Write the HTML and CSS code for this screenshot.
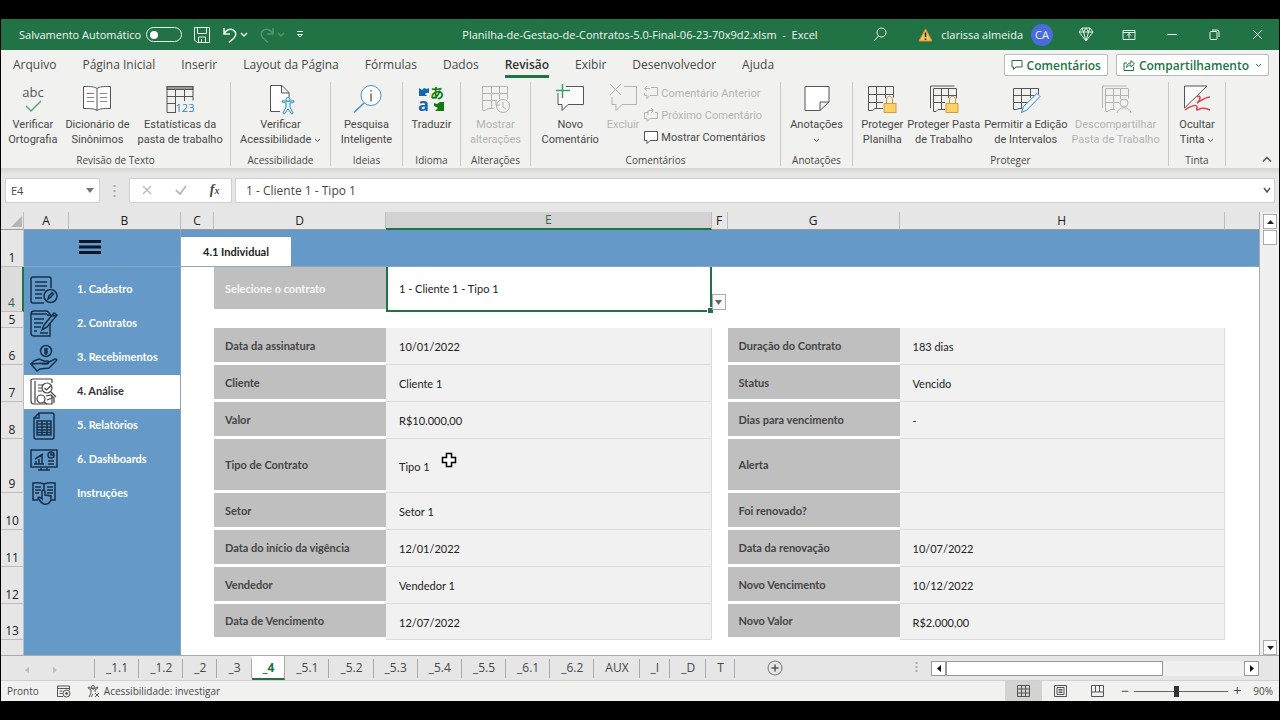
FILE: index.html
```html
<!DOCTYPE html>
<html lang="pt-BR">
<head>
  <meta charset="UTF-8">
  <meta name="viewport" content="width=device-width, initial-scale=1.0">
  <title>Planilha de Gestão de Contratos - Excel</title>
  <link rel="stylesheet" href="styles.css">
</head>
<body>
  <header class="titlebar">
    <div class="quick-access">
      <label class="autosave">Salvamento Automático <input type="checkbox" class="switch"></label>
      <button class="qa-btn" aria-label="Salvar"><svg width="18" height="18" viewBox="0 0 18 18"><path d="M1.500 1.500h15v15H4l-2.500-2.500zM4.500 1.500v6h9v-6M5.500 16.500v-5.500h7v5.500M8.500 13v3"/></svg></button>
      <button class="qa-btn undo" aria-label="Desfazer"><svg width="16" height="18" viewBox="0 0 16 18"><path d="M2 2v6h6M2 8C4 4 8 2 11 4c4 2 3 6 1 8l-5 4.500" stroke-width="1.500"/></svg><svg width="8" height="6" viewBox="0 0 8 6"><path d="M1 1l3 3 3-3" stroke-width="1.500"/></svg></button>
      <button class="qa-btn redo" aria-label="Refazer" disabled><svg width="16" height="18" viewBox="0 0 16 18"><path d="M14 2v6H8M14 8C12 4 8 2 5 4c-4 2-3 6-1 8l5 4.500" stroke-width="1.500"/></svg><svg width="8" height="6" viewBox="0 0 8 6"><path d="M1 1l3 3 3-3" stroke-width="1.500"/></svg></button>
      <button class="qa-btn" aria-label="Personalizar"><svg width="8" height="9" viewBox="0 0 8 9"><path d="M1 1.500h6M1.500 4.500l2.500 2.500 2.500-2.500z"/></svg></button>
    </div>
    <div class="doc-title">Planilha-de-Gestao-de-Contratos-5.0-Final-06-23-70x9d2.xlsm&nbsp; -&nbsp; Excel</div>
    <div class="account">
      <button class="qa-btn search" aria-label="Pesquisar"><svg width="14" height="15" viewBox="0 0 14 15"><circle cx="8.500" cy="5.500" r="4.500"/><path d="M5.500 9L1 14"/></svg></button>
      <svg class="warning" width="15" height="14" viewBox="0 0 15 14"><path d="M7.500 1L14 13H1z" fill="#f9c35c" stroke="#d98e2c"/><path d="M7.500 4.500v4.500M7.500 10.500v1.500" stroke="#222" stroke-width="1.500"/></svg>
      <span>clarissa almeida</span>
      <span class="avatar">CA</span>
      <button class="win-btn" aria-label="Premium"><svg width="16" height="15" viewBox="0 0 16 15"><path d="M4 1h8l3 4-7 9-7-9zM1 5h14M4 1l1.500 4L8 14l2.500-9L12 1M5.500 5L8 1l2.500 4"/></svg></button>
      <button class="win-btn" aria-label="Opções da faixa"><svg width="14" height="12" viewBox="0 0 14 12"><path d="M1 1.500h12v9H1zM1 3.500h12M7 9.500v-5M5 6.500l2-2 2 2"/></svg></button>
      <button class="win-btn" aria-label="Minimizar"><svg width="10" height="10" viewBox="0 0 10 10"><path d="M0 4.500h10"/></svg></button>
      <button class="win-btn" aria-label="Restaurar"><svg width="11" height="11" viewBox="0 0 11 11"><path d="M1 3.500q0-1 1-1h5q1 0 1 1v6q0 1-1 1H2q-1 0-1-1zM3 1h5q2 0 2 2v5"/></svg></button>
      <button class="win-btn" aria-label="Fechar"><svg width="11" height="11" viewBox="0 0 11 11"><path d="M1 1l9 9M10 1l-9 9"/></svg></button>
    </div>
  </header>

  <nav class="menu">
    <a href="#">Arquivo</a>
    <a href="#">Página Inicial</a>
    <a href="#">Inserir</a>
    <a href="#">Layout da Página</a>
    <a href="#">Fórmulas</a>
    <a href="#">Dados</a>
    <a href="#" class="active">Revisão</a>
    <a href="#">Exibir</a>
    <a href="#">Desenvolvedor</a>
    <a href="#">Ajuda</a>
    <div class="share">
      <button class="share-btn"><svg width="12" height="12" viewBox="0 0 12 12"><path d="M1 1.500h10v6.500H5l-2.500 2.500V8H1z"/></svg>Comentários</button>
      <button class="share-btn"><svg width="12" height="12" viewBox="0 0 12 12"><path d="M4 4H1v7.500h9.500V8M3.500 8.500c0-3 2-4.500 4.500-4.500V1.500L11.500 5 8 8V6C6 6 5 7 3.500 8.500z"/></svg>Compartilhamento<svg class="share-arrow" width="7" height="5" viewBox="0 0 7 5"><path d="M1 1l2.500 2.500L6 1"/></svg></button>
    </div>
  </nav>

  <section class="ribbon">
    <div class="group g-text">
      <div class="tools">
        <button class="tool"><svg width="30" height="30" viewBox="0 0 30 30"><text x="15" y="13" text-anchor="middle" class="abc">abc</text><path d="M8 22l5 5 10-10" stroke="#5aa978" stroke-width="1.500"/></svg>Verificar<br>Ortografia</button>
        <button class="tool"><svg width="30" height="30" viewBox="0 0 30 30"><path d="M15 4.500C12 2.500 9 2.500 1.500 2.500v22c7.500 0 10.500 0 13.500 2 3-2 6-2 13.500-2v-22c-7.500 0-10.500 0-13.500 2v22" fill="#fff"/><path d="M18 9.500h7M18 13.500h7M5 17.500h7M18 17.500h7M5 13.500h7" stroke="#888"/><path d="M5 9.500h7" stroke="#c55"/></svg>Dicionário de<br>Sinônimos</button>
        <button class="tool"><svg width="30" height="30" viewBox="0 0 30 30"><path d="M2 2.500h26v3H2z" fill="#999"/><path d="M11 28.500H2v-26h26v14M2 12.500h26M2 19.500h9M10.500 5v23M19.500 5v12"/><text x="20" y="28" text-anchor="middle" class="stat">123</text></svg>Estatísticas da<br>pasta de trabalho</button>
      </div>
      <div class="group-name">Revisão de Texto</div>
    </div>
    <div class="group g-access">
      <div class="tools">
        <button class="tool"><svg width="30" height="30" viewBox="0 0 30 30"><path d="M15 27.500H5.500v-26H17l7 7v5M16.500 1.500V9H24" fill="#fff"/><g stroke="#2f87c1" fill="#e2f1fb"><circle cx="23" cy="15.500" r="2"/><path d="M17 18l4 1v4l-3 6 1.500 1 3.500-5 3.500 5 1.500-1-3-6v-4l4-1-.5-1.500-5.500 1-5.500-1z"/></g></svg>Verificar<br>Acessibilidade <svg class="arrow" width="7" height="5" viewBox="0 0 7 5"><path d="M1 1l2.500 2.500L6 1"/></svg></button>
      </div>
      <div class="group-name">Acessibilidade</div>
    </div>
    <div class="group g-ideas">
      <div class="tools">
        <button class="tool"><svg width="30" height="30" viewBox="0 0 30 30"><circle cx="19" cy="11.500" r="10" fill="#fafcff" stroke="#4a8fc2"/><path d="M12 19L2 28.500" stroke="#4a8fc2" stroke-width="1.500"/><path d="M19 9.500v8M19 6v1.500" stroke="#222"/></svg>Pesquisa<br>Inteligente</button>
      </div>
      <div class="group-name">Ideias</div>
    </div>
    <div class="group g-lang">
      <div class="tools">
        <button class="tool"><svg width="30" height="30" viewBox="0 0 30 30"><text x="2" y="27" class="lang-a">a</text><text x="14" y="14" class="lang-j">あ</text><path d="M3 4v8h8L9 10q2-2 4-1V4l-2 1-3-1-2 2z" fill="#1565b5" stroke="none"/><path d="M28 18v9h-9l3-3-4-2v-3l3 1 3-2z" fill="#107c10" stroke="none"/></svg>Traduzir</button>
      </div>
      <div class="group-name">Idioma</div>
    </div>
    <div class="group g-changes">
      <div class="tools">
        <button class="tool" disabled><svg width="30" height="30" viewBox="0 0 30 30"><path d="M14 24.500H8l-2.500 2H2.500v-24h25v13M2.500 9.500h25M2.500 16.500H17M11.500 2.500v22M19.500 2.500V15"/><circle cx="23" cy="22" r="6.500" fill="#f1f2ef"/><path d="M23 18v5l3 2M16 17v4h4"/></svg>Mostrar<br>alterações</button>
      </div>
      <div class="group-name">Alterações</div>
    </div>
    <div class="group g-comments">
      <div class="tools">
        <button class="tool"><svg width="30" height="30" viewBox="0 0 30 30"><path d="M3 9v11.500h4v6l6-6h15.500v-18H11" fill="#fafafa"/><path d="M7.500 0v14M1 6.500h14" stroke="#3d9e68" stroke-width="1.500"/></svg>Novo<br>Comentário</button>
        <button class="tool" disabled><svg width="30" height="30" viewBox="0 0 30 30"><path d="M4 13v7.500h4v6l6-6h14.500v-18H16"/><path d="M2 0l11 11M13 0L2 11"/></svg>Excluir</button>
        <div class="tool-list">
          <button class="tool-row" disabled><svg width="16" height="16" viewBox="0 0 16 16"><path d="M8 2.500h6.500v8H7l-3 3v-3H1.500V8M4 1L1.500 3.500 4 6M1.500 3.500H7"/></svg>Comentário Anterior</button>
          <button class="tool-row" disabled><svg width="16" height="16" viewBox="0 0 16 16"><path d="M12 5.500h2.500v6H7l-3 3v-3H1.500v-6H5M8 1l2.500 2.500L8 6M5 8V3.500h5"/></svg>Próximo Comentário</button>
          <button class="tool-row"><svg width="16" height="16" viewBox="0 0 16 16"><path d="M1.500 2.500h13v9H7l-3 3v-3H1.500z" fill="#fff"/></svg>Mostrar Comentários</button>
        </div>
      </div>
      <div class="group-name">Comentários</div>
    </div>
    <div class="group g-notes">
      <div class="tools">
        <button class="tool"><svg width="30" height="30" viewBox="0 0 30 30"><path d="M3 2.500h24V18l-9 8.500H3zM27 18h-9v8.500" fill="#fff"/></svg>Anotações<br><svg class="arrow" width="7" height="5" viewBox="0 0 7 5"><path d="M1 1l2.500 2.500L6 1"/></svg></button>
      </div>
      <div class="group-name">Anotações</div>
    </div>
    <div class="group g-protect">
      <div class="tools">
        <button class="tool"><svg width="30" height="30" viewBox="0 0 30 30"><path d="M16 24.500H8l-2.500 2H1.500v-24h25v11M1.500 10.500h25M1.500 18.500H16M9.500 2.500v22M18.500 2.500V14"/><path d="M19.500 19v-3c0-5 6-5 6 0v3" stroke="#c98a2c"/><path d="M17 19.500h12v9H17z" fill="#fcd266" stroke="#d99a3c"/></svg>Proteger<br>Planilha</button>
        <button class="tool"><svg width="30" height="30" viewBox="0 0 30 30"><path d="M1.500 24V2h24" /><path d="M16 25.500H9l-2 2H4.500v-23h23v10M4.500 11.500h23M4.500 18.500H16M12.500 4.500v21M19.500 4.500V14"/><path d="M20.500 19v-3c0-5 6-5 6 0v3" stroke="#c98a2c"/><path d="M17 19.500h12v9H17z" fill="#fcd266" stroke="#d99a3c"/></svg>Proteger Pasta<br>de Trabalho</button>
        <button class="tool"><svg width="30" height="30" viewBox="0 0 30 30"><path d="M11 24.500H8l-2.500 1H2.500v-21h25v6M2.500 11.500h21M2.500 18.500H16M10.500 4.500v20M19.500 4.500V14"/><path d="M10.500 28.500l2-6L26 9.500l3 3-13 13.500z" fill="#eaf5fd" stroke="#3a86bd"/></svg>Permitir a Edição<br>de Intervalos</button>
        <button class="tool" disabled><svg width="30" height="30" viewBox="0 0 30 30"><path d="M1.500 24V2h24"/><path d="M14 25.500H9l-2 2H4.500v-23h23v10M4.500 11.500h23M4.500 18.500H18M12.500 4.500v21M19.500 4.500V15"/><circle cx="23" cy="19" r="4" fill="#f1f2ef"/><path d="M16 29c1-7 13-7 14 0"/></svg>Descompartilhar<br>Pasta de Trabalho</button>
      </div>
      <div class="group-name">Proteger</div>
    </div>
    <div class="group g-ink">
      <div class="tools">
        <button class="tool"><svg width="30" height="30" viewBox="0 0 30 30"><path d="M2.500 2v22L25 2z" fill="#fafafa"/><path d="M15 13c4-3 4 3 0 6 5-3 9-6 13-6M3 26c5-4 12-6 12-3 0 2-1 3 0 3 3-1 6-4 13 0" stroke="#d6474c" stroke-width="1.500"/></svg>Ocultar<br>Tinta <svg class="arrow" width="7" height="5" viewBox="0 0 7 5"><path d="M1 1l2.500 2.500L6 1"/></svg></button>
      </div>
      <div class="group-name">Tinta</div>
    </div>
    <button class="collapse" aria-label="Recolher faixa"><svg width="10" height="7" viewBox="0 0 10 7"><path d="M1 5.500l4-4 4 4" stroke-width="1.500"/></svg></button>
  </section>

  <section class="formula-bar">
    <div class="name-box">
      <input type="text" value="E4" aria-label="Caixa de nome">
      <svg width="8" height="5" viewBox="0 0 8 5"><path d="M0 0h8L4 5z" fill="#777"/></svg>
    </div>
    <svg class="dots" width="3" height="12" viewBox="0 0 3 12"><path d="M1.500 0v12" stroke="#aaa" stroke-width="2" stroke-dasharray="2 3"/></svg>
    <div class="fx-box">
      <button aria-label="Cancelar"><svg width="10" height="10" viewBox="0 0 10 10"><path d="M1 1l8 8M9 1L1 9" stroke="#bbb" stroke-width="1.500"/></svg></button>
      <button aria-label="Inserir"><svg width="12" height="10" viewBox="0 0 12 10"><path d="M1 5l4 4 6-8" stroke="#bbb" stroke-width="2"/></svg></button>
      <button class="fx" aria-label="Inserir função"><i>f<sub>x</sub></i></button>
    </div>
    <div class="formula">
      <input type="text" value="1 - Cliente 1 - Tipo 1" aria-label="Barra de fórmulas">
      <svg width="8" height="7" viewBox="0 0 8 7"><path d="M1 1l3 4 3-4" stroke="#555" stroke-width="1.500"/></svg>
    </div>
  </section>

  <main class="workbook">
    <div class="sheet-wrap">
      <table class="sheet">
        <colgroup>
          <col class="c-num"><col class="c-a"><col class="c-b"><col class="c-c"><col class="c-d"><col><col class="c-f"><col class="c-g"><col><col class="c-end">
        </colgroup>
        <thead>
          <tr>
            <th class="corner"><svg width="11" height="11" viewBox="0 0 11 11"><path d="M11 0v11H0z" fill="#b5b5b5"/></svg></th>
            <th>A</th><th>B</th><th>C</th><th>D</th><th class="current">E</th><th>F</th><th>G</th><th>H</th><th></th>
          </tr>
        </thead>
        <tbody>
          <tr class="row-1">
            <th class="num">1</th>
            <td colspan="2" class="burger"><button aria-label="Menu"><svg width="22" height="14" viewBox="0 0 22 14"><path d="M0 1.500h22M0 7h22M0 12.500h22" stroke="#0b1726" stroke-width="3"/></svg></button></td>
            <td colspan="7" class="top-band"><a href="#" class="page-tab">4.1 Individual</a></td>
          </tr>
          <tr class="row-4">
            <th class="num current">4</th>
            <td colspan="2" rowspan="11" class="side">
              <nav class="side-nav">
                <a href="#"><svg width="28" height="28" viewBox="0 0 28 28"><path d="M14 27H3q-2 0-2-2V3q0-2 2-2h16q2 0 2 2v9M5 6h12M5 10h12M5 14h10M5 18h7M5 22h7"/><circle cx="20.500" cy="20" r="6.500"/><path d="M18 23l1-3 3-3.500 1.500 1.500-3 3.500z"/></svg>1. Cadastro</a>
                <a href="#"><svg width="28" height="28" viewBox="0 0 28 28"><path d="M20 13v13H4q-3 0-3-3V4q0-3 3-3h13l3 3v2M1 4h16"/><path d="M4 9h10M4 13h9M4 17h7M4 21h3"/><path d="M12 20l2-5L24 3l3 2-10 12zM17 5l9 1M10 23h8"/></svg>2. Contratos</a>
                <a href="#"><svg width="28" height="28" viewBox="0 0 28 28"><circle cx="16" cy="7" r="5.500"/><path d="M18 5h-3v2h2v2h-3M16 4v7"/><path d="M1 20l3-3 5-2 5 2h4q2 2-1 3h-5M17 19l8-4q3 0 1 2l-7 7-9 1-3 2-6-7z"/></svg>3. Recebimentos</a>
                <a href="#" class="active"><svg width="28" height="28" viewBox="0 0 28 28"><path d="M22 5V2q0-1-1-1H3Q1 1 1 3v20q0 3 3 3h18v-8M5 3v22M8 7h5M8 10h4M8 13h4"/><circle cx="17" cy="10" r="5"/><path d="M14.500 10l2 2 4-4M21 14l5 5"/><circle cx="11" cy="21" r="4"/><path d="M16 18l5-1 3 3v5M14 24l3 2M17 22l5-2"/></svg>4. Análise</a>
                <a href="#"><svg width="28" height="28" viewBox="0 0 28 28"><path d="M4 6l5-5h13q2 0 2 2v22q0 2-2 2H6q-2 0-2-2zM4 6h5V1M7 9h14v14H7zM12 9v14M17 9v14M7 12h14M7 15h14M7 18h14M7 20.500h14"/></svg>5. Relatórios</a>
                <a href="#"><svg width="28" height="28" viewBox="0 0 28 28"><path d="M1 4h26v17H1zM11 22v2h6v-2M8 24h12"/><path d="M4 18h10M6 18v-3M9 18v-5M12 18V9M5 13l8-5M18 15h6M18 18h6"/><circle cx="21" cy="9" r="3"/><path d="M21 6v3h3"/></svg>6. Dashboards</a>
                <a href="#"><svg width="28" height="28" viewBox="0 0 28 28"><path d="M8 20H3V3q6-1 11 1 5-2 11-1v17h-4M14 4v7"/><path d="M5 7h6M5 10h6M5 13h4M17 7h6M17 10h6M17 13h6"/><path d="M12 17v-6q1-2 3 0v4l6 1v4q-2 5-7 4-3-1-6-6 1-2 4 1z"/></svg>Instruções</a>
              </nav>
            </td>
            <td></td>
            <th class="label picker">Selecione o contrato</th>
            <td class="selected">
              <select aria-label="Selecione o contrato"><option>1 - Cliente 1 - Tipo 1</option></select>
              <span class="handle"></span>
              <button class="drop" aria-label="Abrir lista"><svg width="7" height="5" viewBox="0 0 7 5"><path d="M0 0h7L3.500 5z" fill="#666"/></svg></button>
            </td>
            <td></td><td></td><td></td><td></td>
          </tr>
          <tr class="row-5"><th class="num">5</th><td></td><td></td><td></td><td></td><td></td><td></td><td></td></tr>
          <tr class="row">
            <th class="num">6</th><td></td>
            <th class="label">Data da assinatura</th><td class="value">10/01/2022</td><td></td>
            <th class="label">Duração do Contrato</th><td class="value">183 dias</td><td></td>
          </tr>
          <tr class="row">
            <th class="num">7</th><td></td>
            <th class="label">Cliente</th><td class="value">Cliente 1</td><td></td>
            <th class="label">Status</th><td class="value">Vencido</td><td></td>
          </tr>
          <tr class="row">
            <th class="num">8</th><td></td>
            <th class="label">Valor</th><td class="value">R$10.000,00</td><td></td>
            <th class="label">Dias para vencimento</th><td class="value">-</td><td></td>
          </tr>
          <tr class="row tall">
            <th class="num">9</th><td></td>
            <th class="label">Tipo de Contrato</th>
            <td class="value">Tipo 1<svg class="cursor" width="16" height="16" viewBox="0 0 16 16"><path d="M5.500 1.500h5v4h4v5h-4v4h-5v-4h-4v-5h4z" fill="#fff" stroke="#000" stroke-width="1.500"/></svg></td><td></td>
            <th class="label">Alerta</th><td class="value"></td><td></td>
          </tr>
          <tr class="row">
            <th class="num">10</th><td></td>
            <th class="label">Setor</th><td class="value">Setor 1</td><td></td>
            <th class="label">Foi renovado?</th><td class="value"></td><td></td>
          </tr>
          <tr class="row">
            <th class="num">11</th><td></td>
            <th class="label">Data do início da vigência</th><td class="value">12/01/2022</td><td></td>
            <th class="label">Data da renovação</th><td class="value">10/07/2022</td><td></td>
          </tr>
          <tr class="row">
            <th class="num">12</th><td></td>
            <th class="label">Vendedor</th><td class="value">Vendedor 1</td><td></td>
            <th class="label">Novo Vencimento</th><td class="value">10/12/2022</td><td></td>
          </tr>
          <tr class="row short">
            <th class="num">13</th><td></td>
            <th class="label">Data de Vencimento</th><td class="value">12/07/2022</td><td></td>
            <th class="label">Novo Valor</th><td class="value">R$2.000,00</td><td></td>
          </tr>
          <tr class="row-end"><th class="num"></th><td></td><td></td><td></td><td></td><td></td><td></td><td></td></tr>
        </tbody>
      </table>
    </div>
    <div class="vscroll">
      <button aria-label="Rolar para cima"><svg width="7" height="4" viewBox="0 0 7 4"><path d="M0 4h7L3.500 0z" fill="#222"/></svg></button>
      <div class="vthumb"></div>
      <button class="down" aria-label="Rolar para baixo"><svg width="7" height="4" viewBox="0 0 7 4"><path d="M0 0h7L3.500 4z" fill="#222"/></svg></button>
    </div>
  </main>

  <nav class="sheet-tabs">
    <div class="tab-nav">
      <button aria-label="Planilha anterior"><svg width="5" height="6" viewBox="0 0 5 6"><path d="M4 0v6L0 3z" fill="#bbb"/></svg></button>
      <button aria-label="Próxima planilha"><svg width="5" height="6" viewBox="0 0 5 6"><path d="M1 0v6l4-3z" fill="#bbb"/></svg></button>
    </div>
    <a href="#">_1.1</a>
    <a href="#">_1.2</a>
    <a href="#">_2</a>
    <a href="#">_3</a>
    <a href="#" class="active">_4</a>
    <a href="#">_5.1</a>
    <a href="#">_5.2</a>
    <a href="#">_5.3</a>
    <a href="#">_5.4</a>
    <a href="#">_5.5</a>
    <a href="#">_6.1</a>
    <a href="#">_6.2</a>
    <a href="#">AUX</a>
    <a href="#">_I</a>
    <a href="#">_D</a>
    <a href="#">T</a>
    <button class="add" aria-label="Nova planilha"><svg width="16" height="16" viewBox="0 0 16 16"><circle cx="8" cy="8" r="7" stroke="#777"/><path d="M8 4.500v7M4.500 8h7" stroke="#555" stroke-width="1.500"/></svg></button>
    <svg class="dots" width="3" height="12" viewBox="0 0 3 12"><path d="M1.500 0v12" stroke="#aaa" stroke-width="2" stroke-dasharray="2 2"/></svg>
    <div class="hscroll">
      <button aria-label="Rolar para a esquerda"><svg width="4" height="7" viewBox="0 0 4 7"><path d="M4 0v7L0 3.500z" fill="#111"/></svg></button>
      <div class="hthumb"></div>
      <button class="right" aria-label="Rolar para a direita"><svg width="4" height="7" viewBox="0 0 4 7"><path d="M0 0v7l4-3.500z" fill="#111"/></svg></button>
    </div>
  </nav>

  <footer class="status">
    <span>Pronto</span>
    <svg class="macro" width="14" height="13" viewBox="0 0 14 13"><path d="M6 11.500H.5V1h12v4M.5 3.500h12M2.500 6h3M2.500 8.500h3"/><circle cx="9.500" cy="8.500" r="3.500"/><circle cx="9.500" cy="8.500" r="1" fill="#555"/></svg>
    <button class="access"><svg width="13" height="13" viewBox="0 0 13 13"><circle cx="6" cy="2" r="1.500"/><path d="M1 3l3 2v3L2 12M11 3L8 5v2M1 3q0-1 1-1l3 2h2l3-2q1 0 1 1M6 9l-2 3M8 8l4 4M12 8l-4 4"/></svg>Acessibilidade: investigar</button>
    <div class="views">
      <button class="active" aria-label="Normal"><svg width="13" height="12" viewBox="0 0 13 12"><path d="M.5.5h12v11H.5zM.5 4h12M.5 8h12M4.500.5v11M8.500.5v11"/></svg></button>
      <button aria-label="Layout da Página"><svg width="13" height="12" viewBox="0 0 13 12"><path d="M.5.5h12v11H.5zM3 2.500h7v7H3zM4.500 4.500h4M4.500 6h4M4.500 7.500h4"/></svg></button>
      <button aria-label="Quebra de página"><svg width="13" height="12" viewBox="0 0 13 12"><path d="M.5.5h12v11H.5zM4.500.5V7h4V.5M.5 7h4M8.500 7h4"/></svg></button>
    </div>
    <div class="zoom">
      <button aria-label="Reduzir">−</button>
      <input type="range" min="10" max="190" value="90" aria-label="Zoom">
      <button aria-label="Ampliar">+</button>
      <span>90%</span>
    </div>
  </footer>
</body>
</html>
```
FILE: styles.css
```css
* {
  box-sizing: border-box;
}

body {
  margin: 0;
  padding: 19px 1px;
  height: 100vh;
  display: flex;
  flex-direction: column;
  overflow: hidden;
  background-color: #000;
  font-family: "Open Sans", "Noto Sans", sans-serif;
  font-size: 11px;
  color: #484848;
}

button, input, select {
  font: inherit;
  color: inherit;
  background: none;
  border: none;
  margin: 0;
  padding: 0;
}

a {
  color: inherit;
  text-decoration: none;
}

svg {
  fill: none;
  stroke: none;
  flex: none;
}

/* title bar */
.titlebar {
  height: 31px;
  flex: none;
  display: grid;
  grid-template-columns: 1fr auto 1fr;
  align-items: center;
  background-color: #217346;
  color: #f0f6f2;
}

.titlebar svg {
  stroke: #e8f2ec;
}

.quick-access {
  display: flex;
  align-items: center;
  gap: 11px;
  padding-left: 18px;
}

.autosave {
  display: flex;
  align-items: center;
  gap: 5px;
}

.switch {
  appearance: none;
  width: 36px;
  height: 15px;
  border: 1px solid #e8f2ec;
  border-radius: 8px;
  display: flex;
  align-items: center;
  padding: 0 3px;
}

.switch::before {
  content: "";
  width: 8px;
  height: 8px;
  border-radius: 50%;
  background-color: #fff;
}

.qa-btn {
  display: flex;
  align-items: center;
  gap: 2px;
}

.redo {
  opacity: 0.25;
}

.account {
  display: flex;
  align-items: center;
  justify-content: flex-end;
}

.search {
  margin-right: 31px;
}

.warning {
  margin-right: 8px;
}

.avatar {
  width: 22px;
  height: 22px;
  margin: 0 11px 0 8px;
  border-radius: 50%;
  background-color: #4b6bdc;
  display: flex;
  align-items: center;
  justify-content: center;
}

.win-btn {
  width: 43px;
  height: 31px;
  display: flex;
  align-items: center;
  justify-content: center;
}

/* menu */
.menu {
  height: 30px;
  flex: none;
  display: flex;
  align-items: center;
  gap: 26px;
  padding: 0 10px 0 12px;
  background-color: #f1f2ef;
  font-size: 12px;
}

.menu a {
  height: 26px;
  line-height: 26px;
  white-space: nowrap;
}

.menu .active {
  font-weight: 600;
  color: #333;
  border-bottom: 3px solid #217346;
}

.share {
  margin-left: auto;
  display: flex;
  gap: 8px;
}

.share-btn {
  height: 22px;
  padding: 0 6px;
  display: flex;
  align-items: center;
  gap: 4px;
  border: 1px solid #b9b9b9;
  border-radius: 2px;
  background-color: #fff;
  color: #217346;
  font-weight: 600;
}

.share-btn svg {
  stroke: #217346;
}

.share-arrow {
  margin-left: 2px;
}

/* ribbon */
.ribbon {
  height: 88px;
  flex: none;
  display: flex;
  background-color: #f1f2ef;
}

.ribbon svg {
  stroke: #555;
  overflow: visible;
}

.group {
  display: flex;
  flex-direction: column;
  margin: 2px 0;
  border-right: 1px solid #c9c9c7;
}

.tools {
  flex: 1;
  display: flex;
  justify-content: center;
  font-family: Roboto, "Open Sans", sans-serif;
}

.g-text { width: 230px; }
.g-access { width: 100px; }
.g-ideas { width: 72px; }
.g-lang { width: 58px; }
.g-changes { width: 70px; }
.g-comments { width: 250px; }
.g-notes { width: 72px; }
.g-protect { width: 316px; }
.g-ink { width: 57px; }

.tool {
  padding: 2px 4px 0;
  line-height: 15px;
  text-align: center;
  white-space: nowrap;
  display: block;
  align-self: flex-start;
}

.g-protect .tool {
  padding: 2px 2px 0;
}

.g-comments .tools {
  padding-right: 8px;
}

.tool > svg:first-child {
  display: block;
  margin: 0 auto 3px;
}

.tool .arrow {
  vertical-align: middle;
}

.ribbon button:disabled {
  color: #b4b4b2;
}

.ribbon button:disabled svg {
  stroke: #b4b4b2;
}

.ribbon text {
  font-family: "Open Sans", sans-serif;
  stroke: none;
}

.abc {
  font-size: 13px;
  fill: #555;
}

.stat {
  font-size: 11px;
  fill: #2f87c1;
}

.lang-a {
  font-size: 18px;
  font-weight: 700;
  fill: #1565b5;
}

.ribbon .lang-j {
  font-family: "Noto Sans CJK JP", sans-serif;
  font-size: 14px;
  font-weight: 700;
  fill: #107c10;
}

.tool-list {
  display: flex;
  flex-direction: column;
}

.tool-row {
  height: 22px;
  display: flex;
  align-items: center;
  gap: 2px;
  white-space: nowrap;
}

.group-name {
  height: 11px;
  line-height: 11px;
  font-size: 10px;
  text-align: center;
}

.collapse {
  margin-left: auto;
  align-self: flex-end;
  padding: 0 7px 2px 0;
}

/* formula bar */
.formula-bar {
  height: 44px;
  flex: none;
  display: flex;
  align-items: flex-start;
  padding: 10px 4px 0;
  background: linear-gradient(#d4d5d1, #e6e6e6 6px);
  font-size: 12px;
}

.name-box,
.fx-box,
.formula {
  height: 25px;
  display: flex;
  align-items: center;
  background-color: #fff;
  border: 1px solid #d0d0d0;
}

.name-box {
  width: 95px;
  padding: 0 5px;
}

.name-box input {
  flex: 1;
  min-width: 0;
  font-size: 11px;
}

.formula-bar .dots {
  margin: 7px 13px 0;
}

.fx-box {
  width: 103px;
  justify-content: space-around;
}

.fx {
  font-family: "Liberation Serif", serif;
  font-weight: 700;
  font-size: 14px;
  line-height: 16px;
}

.fx sub {
  font-size: 10px;
  vertical-align: baseline;
}

.formula {
  flex: 1;
  margin-left: 3px;
  padding: 0 3px 0 10px;
}

.formula input {
  flex: 1;
}

/* sheet */
.workbook {
  flex: 1;
  min-height: 0;
  display: flex;
  background-color: #e6e6e6;
}

.sheet-wrap {
  flex: 1;
  overflow: hidden;
  background-color: #fff;
  border-right: 1px solid #aaa;
}

.sheet {
  width: 100%;
  table-layout: fixed;
  border-collapse: separate;
  border-spacing: 0;
  font-family: Lato, "Noto Sans", sans-serif;
  font-size: 11px;
  color: #222;
}

.c-num { width: 23px; }
.c-a { width: 45px; }
.c-b { width: 112px; }
.c-c { width: 33px; }
.c-d { width: 172px; }
.c-f { width: 16px; }
.c-g { width: 172px; }
.c-end { width: 34px; }

.sheet th,
.sheet td {
  padding: 0;
}

.sheet thead th {
  height: 18px;
  font-family: "Open Sans", sans-serif;
  font-weight: 400;
  font-size: 12px;
  line-height: 16px;
  padding-top: 1px;
  background-color: #e6e6e6;
  border-right: 1px solid #bdbdbd;
  border-bottom: 1px solid #9a9a9a;
}

.sheet thead th:last-child {
  border-right: none;
}

.sheet thead .current {
  padding-top: 0;
  background-color: #d2d2d2;
  border-bottom: 2px solid #217346;
  color: #31664a;
}

.corner svg {
  display: block;
  margin-left: 10px;
}

.sheet .num {
  font-family: "Open Sans", sans-serif;
  font-weight: 400;
  font-size: 12px;
  line-height: 16px;
  vertical-align: bottom;
  background-color: #e6e6e6;
  border-right: 1px solid #bdbdbd;
  border-bottom: 1px solid #bdbdbd;
}

.sheet .num.current {
  border-right: 2px solid #217346;
  color: #31664a;
  background-color: #dcdcdc;
}

.row-1 { height: 37px; }
.row-4 { height: 45px; }
.row-5 { height: 16px; }
.row { height: 37px; }
.row.short { height: 36px; }
.row.tall { height: 54px; }
.row-end { height: 16px; }

.sheet .row-5 .num {
  line-height: 15px;
}

.burger,
.top-band {
  background-color: #6499c8;
  border-bottom: 1px solid #8aa5bf;
}

.burger {
  text-align: center;
  border-right: 1px solid #8aa5bf;
}

.burger button {
  margin-right: 25px;
}

.top-band {
  vertical-align: bottom;
}

.page-tab {
  display: block;
  width: 110px;
  height: 29px;
  line-height: 29px;
  text-align: center;
  font-weight: 700;
  background-color: #fff;
}

.side {
  vertical-align: top;
  background-color: #6499c8;
  border-right: 1px solid #8aa5bf;
}

.side-nav {
  padding-top: 6px;
}

.side-nav a {
  height: 34px;
  display: flex;
  align-items: center;
  gap: 19px;
  padding: 0 0 4px 6px;
  font-weight: 700;
  color: #fff;
}

.side-nav svg {
  margin-top: 4px;
  stroke: #16304a;
  stroke-width: 1.5;
}

.side-nav .active {
  background-color: #fff;
  color: #333;
}

.side-nav .active svg {
  stroke: #444;
  stroke-width: 1.2;
}

.sheet .label {
  padding-left: 11px;
  text-align: left;
  font-weight: 700;
  color: #444;
  background-color: #bfbfbf;
  border-bottom: 3px solid #fff;
}

.sheet .picker {
  color: #f7f7f7;
}

.sheet .value {
  position: relative;
  padding: 1px 0 0 13px;
  background-color: #f1f1f1;
  border-right: 1px solid #dcdcdc;
  border-bottom: 1px solid #dcdcdc;
}

.sheet .selected {
  position: relative;
  border: 2px solid #217346;
  border-top: none;
}

.selected select {
  appearance: none;
  width: 100%;
  height: 40px;
  padding-left: 11px;
  display: block;
}

.handle {
  position: absolute;
  right: -3px;
  bottom: -3px;
  width: 5px;
  height: 5px;
  background-color: #217346;
  outline: 1px solid #fff;
}

.drop {
  position: absolute;
  left: 100%;
  bottom: 0;
  margin-left: 2px;
  width: 14px;
  height: 16px;
  display: flex;
  align-items: center;
  justify-content: center;
  background-color: #fbfbfb;
  border: 1px solid #aaa;
}

.cursor {
  position: absolute;
  left: 55px;
  top: 13px;
}

.vscroll {
  width: 19px;
  padding: 2px 2px 0 3px;
  display: flex;
  flex-direction: column;
  background-color: #f0f0f0;
}

.vscroll button,
.vthumb {
  height: 15px;
  display: flex;
  align-items: center;
  justify-content: center;
  background-color: #fff;
  border: 1px solid #aaa;
}

.vthumb {
  margin-top: 1px;
}

.vscroll .down {
  margin-top: auto;
}

/* sheet tabs */
.sheet-tabs {
  height: 26px;
  flex: none;
  display: flex;
  align-items: center;
  background-color: #e6e6e6;
  border-top: 1px solid #ababab;
  border-bottom: 1px solid #d0d0d0;
  padding-right: 20px;
  font-size: 12px;
}

.tab-nav {
  width: 94px;
  height: 19px;
  padding-left: 24px;
  display: flex;
  align-items: center;
  gap: 22px;
  border-right: 1px solid #aaa;
}

.sheet-tabs a {
  height: 19px;
  line-height: 18px;
  padding: 0 10px 0 11px;
  border-right: 1px solid #aaa;
}

.sheet-tabs .active {
  height: 24px;
  line-height: 23px;
  align-self: flex-start;
  background-color: #fff;
  border-bottom: 2px solid #217346;
  color: #217346;
  font-weight: 700;
}

.add {
  display: flex;
  margin-left: 32px;
}

.sheet-tabs .dots {
  margin-left: auto;
  margin-right: 13px;
}

.hscroll {
  width: 328px;
  height: 15px;
  display: flex;
  background-color: #f0f0f0;
}

.hscroll button,
.hthumb {
  width: 15px;
  display: flex;
  align-items: center;
  justify-content: center;
  background-color: #fff;
  border: 1px solid #999;
}

.hthumb {
  width: 217px;
}

.hscroll .right {
  margin-left: auto;
}

/* status bar */
.status {
  flex: none;
  height: 20px;
  display: flex;
  align-items: center;
  padding: 0 6px;
  background-color: #f1f2ef;
  font-size: 10px;
}

.status svg {
  stroke: #555;
}

.macro {
  margin: 0 16px 0 18px;
}

.access {
  display: flex;
  align-items: center;
  gap: 4px;
}

.views {
  margin-left: auto;
  display: flex;
}

.views button {
  width: 37px;
  height: 20px;
  display: flex;
  align-items: center;
  justify-content: center;
}

.views .active {
  background-color: #d3d3d1;
}

.zoom {
  display: flex;
  align-items: center;
  gap: 4px;
  padding-left: 4px;
}

.zoom button {
  width: 10px;
  font-size: 14px;
  line-height: 16px;
}

.zoom span {
  margin-left: 7px;
}

.zoom input {
  appearance: none;
  width: 94px;
  height: 1px;
  background-color: #666;
}

.zoom input::-webkit-slider-thumb {
  appearance: none;
  width: 5px;
  height: 11px;
  background-color: #333;
}
```
